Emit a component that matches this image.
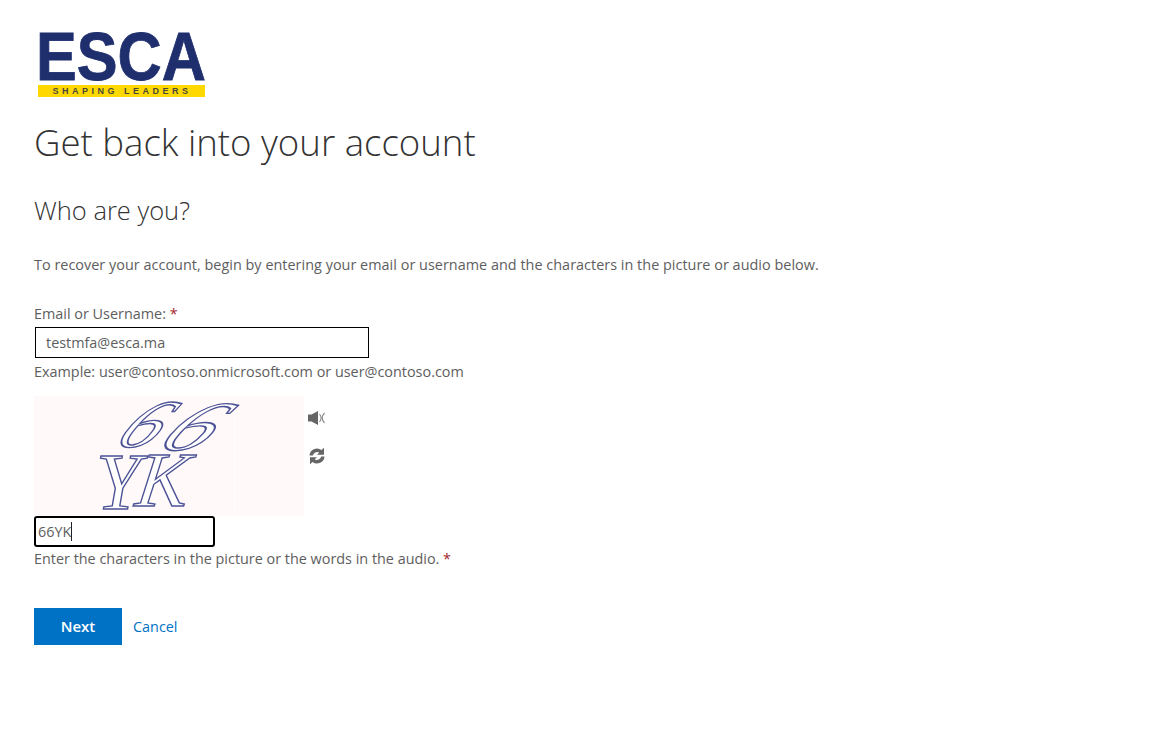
<main class="page">
  <svg class="logo" width="172" height="70" viewBox="0 0 172 70" role="img" aria-label="ESCA logo">
    <text class="logo-word" x="0" y="52" textLength="170" lengthAdjust="spacingAndGlyphs">ESCA</text>
    <rect x="2" y="57" width="167" height="12" fill="#ffd800" />
    <text class="logo-tag" x="86" y="66" text-anchor="middle">SHAPING LEADERS</text>
  </svg>

  <h1>Get back into your account</h1>
  <h2>Who are you?</h2>
  <p class="intro">To recover your account, begin by entering your email or username and the characters in the picture or audio below.</p>

  <label class="field-label" for="email">Email or Username: <span class="req">*</span></label>
  <input id="email" class="email" value="testmfa@esca.ma" />
  <p class="help">Example: user@contoso.onmicrosoft.com or user@contoso.com</p>

  <div class="captcha-row">
    <div class="captcha">
      <svg width="270" height="120" viewBox="0 0 270 120" role="img" aria-label="captcha">
        <rect width="270" height="120" fill="#fff9f9" />
        <rect x="200" width="1" height="120" fill="#fffdfd" />
        <g class="cap">
          <text transform="translate(78 51) scale(1.15 1) skewX(-32)" font-size="68">6</text>
          <text transform="translate(120 54) scale(1.35 1) skewX(-32)" font-size="70">6</text>
          <text transform="translate(62 113)" font-size="80">Y</text>
          <text transform="translate(100 110) skewX(-8)" font-size="78">K</text>
        </g>
      </svg>
    </div>
    <div class="captcha-tools">
      <svg width="18" height="16" viewBox="0 0 18 16" aria-label="audio">
        <path d="M0 4.500h3.500L10 1v14L3.500 11.500H0z" fill="#666" />
        <path d="M11.500 4c2 2.500 2 5.500 0 8M16.500 3c-3 3-3 7 0 10" fill="none" stroke="#888" stroke-width="1.100" />
      </svg>
      <svg width="18" height="18" viewBox="0 0 18 18" aria-label="refresh">
        <path d="M1.500 8.500A7.500 7.500 0 0 1 13.500 3L16 .800v7h-7l2.300-2.300A4.500 4.500 0 0 0 4.800 8.500z" fill="#666" />
        <path d="M16.500 9.500A7.500 7.500 0 0 1 4.500 15L2 17.200v-7h7l-2.300 2.300A4.500 4.500 0 0 0 13.200 9.500z" fill="#666" />
      </svg>
    </div>
  </div>

  <div class="code"><span class="typed">66YK</span><span class="caret"></span></div>
  <p class="hint">Enter the characters in the picture or the words in the audio. <span class="req">*</span></p>

  <div class="actions">
    <button class="next">Next</button>
    <a class="cancel" href="#cancel">Cancel</a>
  </div>
</main>

<style>
  :global(body) {
    margin: 0;
    background: #fff;
  }
  .page {
    padding: 28px 0 0 34px;
    font-family: "Open Sans", "Noto Sans", sans-serif;
    font-size: 14.400px;
    color: #5e5e5e;
    height: 719px;
    overflow: hidden;
  }
  .logo {
    display: block;
    margin-left: 2px;
  }
  .logo-word {
    font-family: "Liberation Sans", sans-serif;
    font-weight: 700;
    font-size: 68px;
    fill: #1f2f6e;
    stroke: #1f2f6e;
    stroke-width: 0.800px;
  }
  .logo-tag {
    font-family: "Liberation Sans", sans-serif;
    font-weight: 700;
    font-size: 9px;
    letter-spacing: 3.500px;
    fill: #4a4a3a;
  }
  h1 {
    margin: 20px 0 0;
    font-family: "Open Sans", sans-serif;
    font-weight: 300;
    font-size: 36.600px;
    line-height: 48px;
    color: #333;
  }
  h2 {
    margin: 26px 0 0;
    font-family: "Open Sans", sans-serif;
    font-weight: 300;
    font-size: 25.500px;
    line-height: 36px;
    color: #333;
  }
  .intro {
    margin: 27px 0 0;
    line-height: 20px;
    letter-spacing: 0.030px;
  }
  .field-label {
    display: block;
    margin-top: 29px;
    line-height: 20px;
  }
  .req {
    color: #a4262c;
  }
  .email {
    display: block;
    box-sizing: border-box;
    width: 334px;
    height: 31px;
    margin: 3px 0 0 1px;
    padding: 0 10px;
    border: 1px solid #000;
    border-radius: 0;
    outline: none;
    font: inherit;
    color: #5e5e5e;
  }
  .help {
    margin: 4px 0 0;
    line-height: 20px;
  }
  .hint {
    margin: 2px 0 0;
    line-height: 20px;
  }
  .captcha-row {
    display: flex;
    margin-top: 14px;
    height: 120px;
  }
  .captcha svg {
    display: block;
  }
  .cap text {
    font-family: "Liberation Serif", serif;
    font-style: italic;
    fill: #fff;
    fill-opacity: 0.850;
    stroke: #4c5296;
    stroke-width: 1.400px;
  }
  .captcha-tools {
    display: flex;
    flex-direction: column;
    align-items: flex-start;
    gap: 21px;
    padding: 14px 0 0 4px;
  }
  .code {
    box-sizing: border-box;
    display: flex;
    align-items: center;
    width: 181px;
    height: 31px;
    padding-left: 2px;
    border: 2px solid #000;
    border-radius: 3px;
  }
  .caret {
    width: 1px;
    height: 19px;
    background: #222;
  }
  .actions {
    display: flex;
    align-items: center;
    gap: 11px;
    margin-top: 39px;
  }
  .next {
    width: 88px;
    height: 37px;
    padding: 0 0 2px;
    border: none;
    background: #0072c6;
    color: #fff;
    font: 600 15px "Open Sans", sans-serif;
  }
  .cancel {
    color: #0072c6;
    text-decoration: none;
  }
</style>
